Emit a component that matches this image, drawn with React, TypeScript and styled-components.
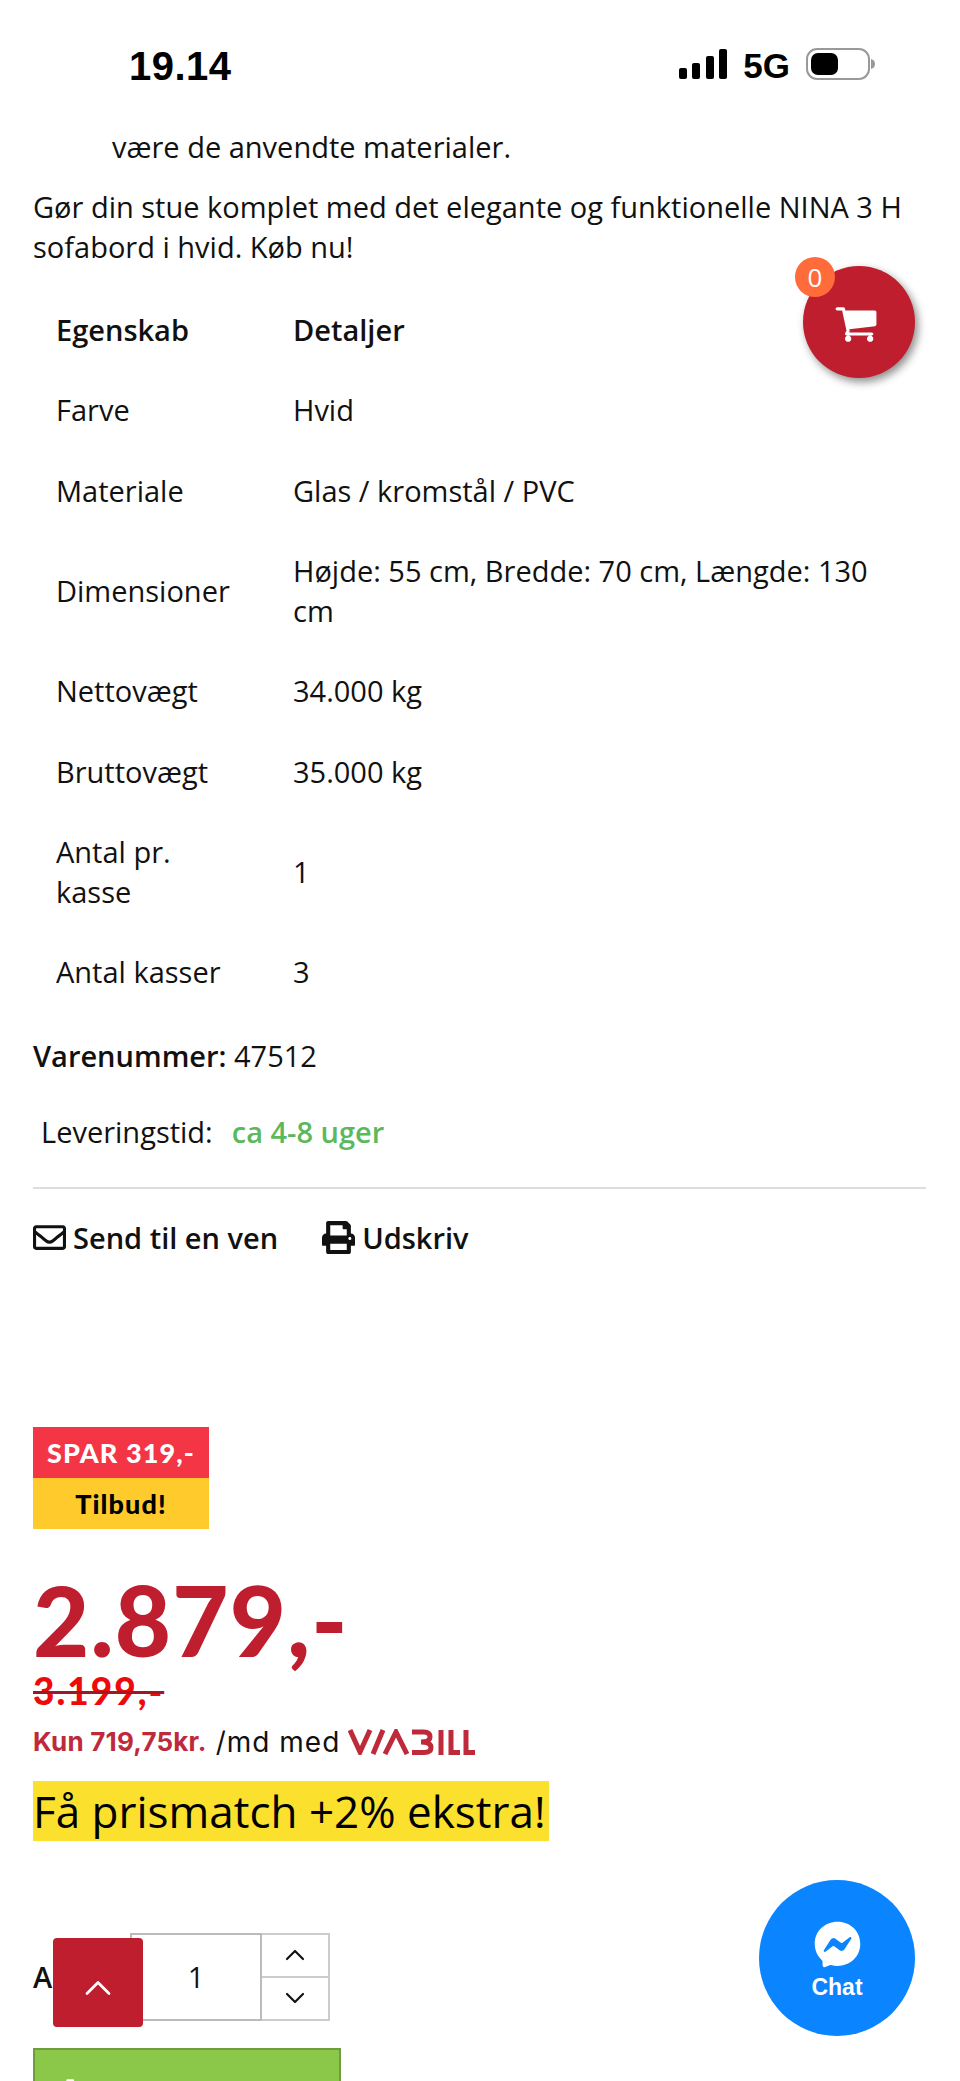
import styled, { createGlobalStyle } from "styled-components"
import { ChevronDown, ChevronUp } from "lucide-react"
import { FaFacebookMessenger, FaPrint, FaRegEnvelope } from "react-icons/fa"

const GlobalStyle = createGlobalStyle`
    html, body {
        margin: 0;
        padding: 0;
        background: #fff;
    }
    * {
        box-sizing: border-box;
    }
`

const Page = styled.div`
    position: relative;
    width: 960px;
    height: 2081px;
    overflow: hidden;
    background: #fff;
    color: #111;
    font-family: "Open Sans", sans-serif;
    font-size: 29px;
    line-height: 40px;
`

const StatusBar = styled.div`
    height: 127px;
    padding: 44px 84px 0 129px;
    display: flex;
    justify-content: space-between;
    align-items: flex-start;
    font-family: "Liberation Sans", Arial, sans-serif;
    font-weight: 700;
    color: #000;
`

const Time = styled.div`
    font-size: 40px;
    line-height: 44px;
    letter-spacing: 0.5px;
`

const StatusIcons = styled.div`
    display: flex;
    align-items: center;
    height: 40px;
    gap: 16px;
`

const NetworkLabel = styled.div`
    font-size: 35px;
    line-height: 40px;
    padding-top: 3px;
`

const Content = styled.div`
    padding: 0 34px 0 33px;
`

const List = styled.ul`
    margin: 0 0 20px;
    padding: 0 0 0 79px;
    list-style: none;
`

const Paragraph = styled.p`
    margin: 0 0 24px;
    line-height: 39.5px;
`

const SpecTable = styled.table`
    width: 893px;
    border-collapse: collapse;
    table-layout: fixed;
    line-height: 40.25px;
`

const KeyColumn = styled.col`
    width: 237px;
`

const SpecHead = styled.th`
    padding: 20px 23px;
    text-align: left;
    font-weight: 600;
`

const SpecCell = styled.td`
    padding: 20px 23px;
`

const Sku = styled.div`
    margin-top: 23px;
    strong {
        font-weight: 600;
    }
`

const Delivery = styled.div`
    margin-top: 36px;
    padding-left: 8px;
    display: flex;
    gap: 19px;
`

const InStock = styled.span`
    color: #5cb85c;
    font-weight: 600;
`

const Divider = styled.hr`
    margin: 35px 0 29px;
    border: 0;
    height: 2px;
    background: #ddd;
`

const Actions = styled.div`
    display: flex;
    gap: 44px;
    font-weight: 600;
`

const ActionLink = styled.a`
    display: flex;
    align-items: center;
    gap: 7px;
    color: #111;
    svg {
        font-size: 33px;
    }
`

const OfferBadge = styled.div`
    margin-top: 169px;
    width: 176px;
    font-family: Lato, sans-serif;
    font-weight: 900;
    text-align: center;
`

const OfferLine = styled.div<{ $bg: string; $color: string }>`
    height: 51px;
    font-size: 27px;
    line-height: 51px;
    letter-spacing: 1.1px;
    background: ${p => p.$bg};
    color: ${p => p.$color};
`

const Price = styled.div`
    margin-top: 40px;
    height: 102px;
    font-family: Lato, sans-serif;
    font-size: 97px;
    line-height: 102px;
    font-weight: 900;
    letter-spacing: 1.2px;
    color: #be1e2d;
`

const OldPrice = styled.div`
    margin-top: 2px;
    font-family: Lato, sans-serif;
    font-size: 37px;
    line-height: 36px;
    font-weight: 900;
    letter-spacing: 2px;
    color: #ee0a0a;
    text-decoration: line-through;
    text-decoration-color: #9c1a25;
`

const Installment = styled.div`
    margin-top: 15px;
    display: flex;
    align-items: center;
    font-family: Inter, sans-serif;
    font-size: 28px;
    line-height: 36px;
    letter-spacing: 1px;
`

const InstallmentPrice = styled.span`
    color: #be2a3a;
    font-weight: 700;
    font-size: 26px;
    letter-spacing: 0.2px;
    margin-right: 9px;
`

const ViabillLogo = styled.svg`
    margin-left: 8px;
    width: 127px;
    height: 26px;
`

const PriceMatch = styled.div`
    margin-top: 21px;
    width: 516px;
    height: 60px;
    background: #fbe12d;
    color: #000;
    font-size: 44px;
    line-height: 60px;
    font-weight: 500;
    white-space: nowrap;
`

const QtyRow = styled.div`
    margin-top: 92px;
    display: flex;
    align-items: center;
    height: 88px;
`

const QtyLabel = styled.label`
    width: 97px;
    font-weight: 600;
`

const QtyValue = styled.div`
    width: 132px;
    height: 88px;
    border: 2px solid #bbb;
    display: flex;
    align-items: center;
    justify-content: center;
`

const Spinner = styled.div`
    width: 68px;
    height: 88px;
    border: 2px solid #ccc;
    border-left: 0;
    display: grid;
    grid-template-rows: 41px 1fr;
`

const SpinnerButton = styled.div`
    display: flex;
    align-items: center;
    justify-content: center;
    color: #111;
    & + & {
        border-top: 2px solid #ccc;
    }
`

const BuyButton = styled.div`
    margin-top: 27px;
    width: 308px;
    height: 90px;
    padding: 24px 0 0 30px;
    display: flex;
    align-items: flex-start;
    background: #8bc84a;
    border: 2px solid #6f9c3c;
    color: #fff;
`

const CartFab = styled.div`
    position: absolute;
    left: 803px;
    top: 266px;
    width: 112px;
    height: 112px;
    border-radius: 50%;
    background: #be1e2d;
    box-shadow: 3px 4px 8px rgba(0, 0, 0, 0.45);
    color: #fff;
    display: flex;
    align-items: center;
    justify-content: center;
    padding: 2px 6px 0 0;
`

const CartCount = styled.div`
    position: absolute;
    left: -8px;
    top: -9px;
    width: 40px;
    height: 40px;
    border-radius: 50%;
    background: #ff6b3a;
    color: #fff;
    font-size: 26px;
    line-height: 40px;
    text-align: center;
`

const ChatFab = styled.div`
    position: absolute;
    left: 759px;
    top: 1880px;
    width: 156px;
    height: 156px;
    border-radius: 50%;
    background: #0a84ff;
    color: #fff;
    display: flex;
    flex-direction: column;
    align-items: center;
    padding-top: 41px;
    font-family: "Liberation Sans", Arial, sans-serif;
    font-size: 23px;
    line-height: 30px;
    font-weight: 700;
    span {
        margin-top: 4px;
    }
`

const ScrollTop = styled.div`
    position: absolute;
    left: 53px;
    top: 1938px;
    width: 90px;
    height: 89px;
    border-radius: 4px;
    background: #be1e2d;
    color: #fff;
    display: flex;
    align-items: center;
    justify-content: center;
    padding-top: 10px;
`

const specs = [
    ["Farve", "Hvid"],
    ["Materiale", "Glas / kromstål / PVC"],
    ["Dimensioner", "Højde: 55 cm, Bredde: 70 cm, Længde: 130 cm"],
    ["Nettovægt", "34.000 kg"],
    ["Bruttovægt", "35.000 kg"],
    ["Antal pr. kasse", "1"],
    ["Antal kasser", "3"],
]

const bars = [
    { x: 0, h: 11 },
    { x: 13, h: 16 },
    { x: 27, h: 23 },
    { x: 40, h: 30 },
]

const CartIcon = ({ size }: { size: number }) => (
    <svg width={size} height={size} viewBox="0 0 1792 1792" fill="currentColor">
        <path d="M704 1536q0 52-38 90t-90 38-90-38-38-90 38-90 90-38 90 38 38 90zm896 0q0 52-38 90t-90 38-90-38-38-90 38-90 90-38 90 38 38 90zm128-1088v512q0 24-16.5 42.5t-40.5 21.5l-1044 122q13 60 13 70 0 16-24 64h920q26 0 45 19t19 45-19 45-45 19h-1024q-26 0-45-19t-19-45q0-11 8-31.5t16-36 21.5-40 15.5-29.5l-177-823h-204q-26 0-45-19t-19-45 19-45 45-19h256q16 0 28.5 6.5t19.5 15.5 13 24.5 8 26 5.5 29.5 4.5 26h1201q26 0 45 19t19 45z" />
    </svg>
)

export const App = () => {
    return (
        <Page>
            <GlobalStyle />
            <StatusBar>
                <Time>19.14</Time>
                <StatusIcons>
                    <svg width="48" height="30" viewBox="0 0 48 30">
                        {bars.map(b => (
                            <rect key={b.x} x={b.x} y={30 - b.h} width="8" height={b.h} rx="2" fill="#000" />
                        ))}
                    </svg>
                    <NetworkLabel>5G</NetworkLabel>
                    <svg width="70" height="32" viewBox="0 0 70 32">
                        <rect x="1" y="1" width="62" height="30" rx="10" fill="none" stroke="#999" strokeWidth="2" />
                        <rect x="5" y="5" width="27" height="22" rx="7" fill="#000" />
                        <path d="M65 11 q4 1 4 5 t-4 5 z" fill="#999" />
                    </svg>
                </StatusIcons>
            </StatusBar>
            <Content>
                <List>
                    <li>være de anvendte materialer.</li>
                </List>
                <Paragraph>Gør din stue komplet med det elegante og funktionelle NINA 3 H sofabord i hvid. Køb nu!</Paragraph>
                <SpecTable>
                    <colgroup>
                        <KeyColumn />
                        <col />
                    </colgroup>
                    <thead>
                        <tr>
                            <SpecHead>Egenskab</SpecHead>
                            <SpecHead>Detaljer</SpecHead>
                        </tr>
                    </thead>
                    <tbody>
                        {specs.map(([key, value]) => (
                            <tr key={key}>
                                <SpecCell>{key}</SpecCell>
                                <SpecCell>{value}</SpecCell>
                            </tr>
                        ))}
                    </tbody>
                </SpecTable>
                <Sku><strong>Varenummer:</strong> 47512</Sku>
                <Delivery>
                    <span>Leveringstid:</span>
                    <InStock>ca 4-8 uger</InStock>
                </Delivery>
                <Divider />
                <Actions>
                    <ActionLink><FaRegEnvelope />Send til en ven</ActionLink>
                    <ActionLink><FaPrint />Udskriv</ActionLink>
                </Actions>
                <OfferBadge>
                    <OfferLine $bg="#f43545" $color="#fff">SPAR 319,-</OfferLine>
                    <OfferLine $bg="#ffca2c" $color="#000">Tilbud!</OfferLine>
                </OfferBadge>
                <Price>2.879,-</Price>
                <OldPrice>3.199,-</OldPrice>
                <Installment>
                    <InstallmentPrice>Kun 719,75kr.</InstallmentPrice>
                    <span>/md med</span>
                    <ViabillLogo viewBox="0 0 127 26" role="img" aria-label="ViaBill">
                        <g fill="none" stroke="#be2a3a" strokeWidth="5">
                            <polyline points="2,1 12,23 22,1" />
                            <line x1="25" y1="25" x2="35" y2="1" />
                            <polyline points="37,25 48,3 59,25" />
                            <path d="M64 3 H76 Q82 3 82 8 Q82 13 73 13 Q83 13 83 18.5 Q83 23.5 76 23.5 H64" />
                            <line x1="93" y1="1" x2="93" y2="26" />
                            <polyline points="103,1 103,23.5 112,23.5" />
                            <polyline points="118,1 118,23.5 127,23.5" />
                        </g>
                    </ViabillLogo>
                </Installment>
                <PriceMatch>Få prismatch +2% ekstra!</PriceMatch>
                <QtyRow>
                    <QtyLabel>Antal:</QtyLabel>
                    <QtyValue>1</QtyValue>
                    <Spinner>
                        <SpinnerButton><ChevronUp size={32} strokeWidth={1.6} /></SpinnerButton>
                        <SpinnerButton><ChevronDown size={32} strokeWidth={1.6} /></SpinnerButton>
                    </Spinner>
                </QtyRow>
                <BuyButton><CartIcon size={36} /></BuyButton>
            </Content>
            <CartFab>
                <CartCount>0</CartCount>
                <CartIcon size={44} />
            </CartFab>
            <ChatFab>
                <FaFacebookMessenger size={47} />
                <span>Chat</span>
            </ChatFab>
            <ScrollTop><ChevronUp size={44} strokeWidth={1.5} /></ScrollTop>
        </Page>
    )
}

export default App
